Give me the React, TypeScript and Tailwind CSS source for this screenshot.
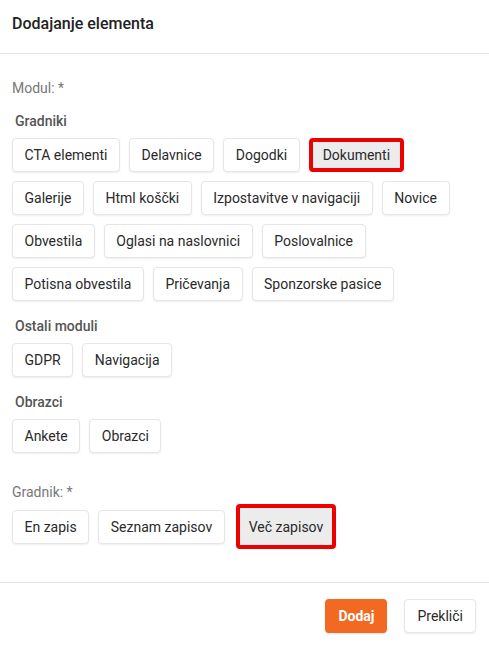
import React from "react";

type Item = { label: string; selected?: boolean };

const gradniki: Item[] = [
  { label: "CTA elementi" },
  { label: "Delavnice" },
  { label: "Dogodki" },
  { label: "Dokumenti", selected: true },
  { label: "Galerije" },
  { label: "Html koščki" },
  { label: "Izpostavitve v navigaciji" },
  { label: "Novice" },
  { label: "Obvestila" },
  { label: "Oglasi na naslovnici" },
  { label: "Poslovalnice" },
  { label: "Potisna obvestila" },
  { label: "Pričevanja" },
  { label: "Sponzorske pasice" },
];

const ostali: Item[] = [{ label: "GDPR" }, { label: "Navigacija" }];
const obrazci: Item[] = [{ label: "Ankete" }, { label: "Obrazci" }];

function Chip({ item }: { item: Item }) {
  if (item.selected) {
    return (
      <button className="h-[34px] rounded-[4px] border-4 border-[#ee0000] bg-[#ececec] px-[10px] text-[14px] leading-4 text-[#2a2a2a]">
        {item.label}
      </button>
    );
  }
  return (
    <button className="h-[34px] rounded-[4px] border border-[#e6e6e6] bg-white px-[11.5px] text-[14px] leading-4 text-[#2a2a2a] shadow-[0_1px_2px_rgba(0,0,0,0.07)]">
      {item.label}
    </button>
  );
}

function Group({ title, items }: { title: string; items: Item[] }) {
  return (
    <div className="mt-[17px]">
      <div className="pl-[3px] text-[14px] font-medium leading-4 text-[#555]">{title}</div>
      <div className="mt-[9px] flex flex-wrap gap-[9px]">
        {items.map((it) => (
          <Chip key={it.label} item={it} />
        ))}
      </div>
    </div>
  );
}

export default function App() {
  return (
    <div className="h-[648px] w-[489px] bg-white font-['Roboto',sans-serif]">
      <div className="h-[54px] border-b border-[#e4e4e4] px-3 pt-[15px]">
        <h2 className="text-[16px] font-medium leading-[18px] text-[#222]">Dodajanje elementa</h2>
      </div>

      <div className="px-3">
        <div className="mt-[26px] text-[14px] leading-4 text-[#777]">Modul: *</div>
        <Group title="Gradniki" items={gradniki} />
        <Group title="Ostali moduli" items={ostali} />
        <Group title="Obrazci" items={obrazci} />

        <div className="mt-[31px] text-[14px] leading-4 text-[#777]">Gradnik: *</div>
        <div className="mt-[4px] flex items-center gap-[9px] pb-[33px]">
          <Chip item={{ label: "En zapis" }} />
          <Chip item={{ label: "Seznam zapisov" }} />
          <button className="ml-[2px] h-[45px] rounded-[4px] border-4 border-[#ee0000] bg-[#ececec] px-[9px] text-[14px] leading-4 text-[#2a2a2a]">
            Več zapisov
          </button>
        </div>
      </div>

      <div className="flex justify-end gap-[17px] border-t border-[#e4e4e4] pr-[13px] pt-4">
        <button className="h-[34px] rounded-[4px] bg-[#f26a21] px-[13px] text-[14px] font-bold text-white shadow-[0_1px_2px_rgba(0,0,0,0.1)]">
          Dodaj
        </button>
        <button className="h-[34px] rounded-[4px] border border-[#e6e6e6] bg-white px-3 text-[14px] text-[#2a2a2a] shadow-[0_1px_2px_rgba(0,0,0,0.07)]">
          Prekliči
        </button>
      </div>
    </div>
  );
}
